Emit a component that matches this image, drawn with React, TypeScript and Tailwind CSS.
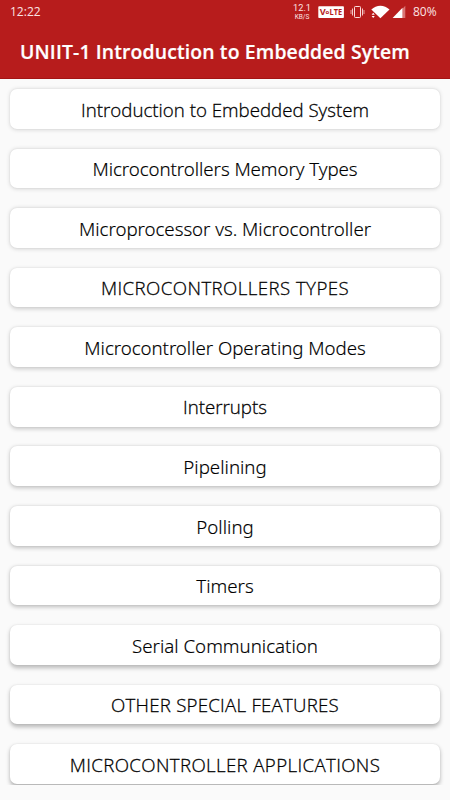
import React from 'react';
interface Topic {
  title: string;
  style: string;
}
const topics: Topic[] = [
{ title: 'Introduction to Embedded System', style: "font-['Open_Sans'] [-webkit-text-stroke:0.28px_black]" },
{ title: 'Microcontrollers Memory Types', style: "font-['Noto_Sans'] [-webkit-text-stroke:0.15px_black] tracking-[-0.06px]" },
{ title: 'Microprocessor vs. Microcontroller', style: "font-['Noto_Sans'] [-webkit-text-stroke:0.15px_black] tracking-[-0.03px]" },
{ title: 'MICROCONTROLLERS TYPES', style: "font-['Open_Sans'] [-webkit-text-stroke:0.28px_black] tracking-[0.41px]" },
{ title: 'Microcontroller Operating Modes', style: "font-['Noto_Sans'] [-webkit-text-stroke:0.15px_black] tracking-[-0.04px]" },
{ title: 'Interrupts', style: "font-['Open_Sans'] [-webkit-text-stroke:0.28px_black]" },
{ title: 'Pipelining', style: "font-['Noto_Sans'] [-webkit-text-stroke:0.15px_black]" },
{ title: 'Polling', style: "font-['Noto_Sans'] [-webkit-text-stroke:0.15px_black]" },
{ title: 'Timers', style: "font-['Noto_Sans'] [-webkit-text-stroke:0.15px_black]" },
{ title: 'Serial Communication', style: "font-['Noto_Sans'] [-webkit-text-stroke:0.15px_black]" },
{ title: 'OTHER SPECIAL FEATURES', style: "font-['Open_Sans'] [-webkit-text-stroke:0.28px_black] tracking-[0.23px]" },
{ title: 'MICROCONTROLLER APPLICATIONS', style: "font-['Open_Sans'] [-webkit-text-stroke:0.28px_black] tracking-[0.36px]" }];

function StatusIcons() {
  return (
    <svg width="90" height="16" viewBox="318 4 90 16" className="block">
      <rect x="318.3" y="6.2" width="25.6" height="11.8" rx="0.8" fill="#fff" />
      <text x="319.8" y="15" fontSize="8.2" fontWeight="700" fill="#b71c1c" textLength="6" lengthAdjust="spacingAndGlyphs">V</text>
      <text x="325.4" y="14.2" fontSize="6" fontWeight="700" fill="#b71c1c">o</text>
      <text x="329.5" y="15" fontSize="8.2" fontWeight="700" fill="#b71c1c" textLength="12.6" lengthAdjust="spacingAndGlyphs">LTE</text>
      <g fill="none" stroke="#fbdede" strokeWidth="1">
        <rect x="354.5" y="6.5" width="6" height="11" rx="0.8" />
        <path d="M352.5 8.5v7M362.5 8.5v7" strokeWidth="0.9" />
        <path d="M351 10v4M364 10v4" strokeWidth="0.7" />
      </g>
      <path d="M371.3 9.6C376.4 4.5 384.4 4.5 389.5 9.6L380.4 18.2z" fill="#fff" />
      <path d="M371.6 14.8l1.6-2.1 1.6 2.1zM371.6 15.9l1.6 2.1 1.6-2.1z" fill="#fff" />
      <path d="M402.5 8.7L405.3 5.8V18H402.5z" fill="#d97474" />
      <path d="M392.6 18L402.5 7.7V18z" fill="#fff" />
    </svg>);

}
function TopicCard({ topic, index }: {topic: Topic;index: number;}) {
  const drop = 0.6 + index * 0.17;
  const alpha = 0.14 + index * 0.013;
  return (
    <div
      className="flex h-[39.8px] shrink-0 items-center justify-center rounded-[7px] bg-white"
      style={{ boxShadow: `0 ${drop}px 4px rgba(0,0,0,${alpha}), 0 0 2px rgba(0,0,0,0.07)` }}>

      <span className={`whitespace-nowrap pt-[1.4px] text-[18.7px] font-light leading-[26px] text-black ${topic.style}`}>
        {topic.title}
      </span>
    </div>);

}
export default function App() {
  return (
    <div className="flex h-[800px] w-[450px] flex-col overflow-hidden bg-[#fafafa] font-['Open_Sans',sans-serif]">
      <header className="h-[79px] shrink-0 border-b border-[#a31414] bg-[#b71c1c] text-white">
        <div className="flex h-6 items-center pl-[10px] text-[12px] text-[#fbe3e3]">
          <span>12:22</span>
          <div className="ml-auto flex items-center">
            <div className="mr-[7px] flex flex-col items-center font-['Roboto']">
              <span className="text-[9.2px] leading-[10px]">12.1</span>
              <span className="text-[6.5px] leading-[9px]">KB/S</span>
            </div>
            <StatusIcons />
            <span className="ml-[5px] w-[37px]">80%</span>
          </div>
        </div>
        <h1 className="whitespace-nowrap pl-5 pt-[14px] text-[19.4px] font-semibold leading-[28px] tracking-[0.13px] [-webkit-text-stroke:0.2px_white]">
          UNIIT-1 Introduction to Embedded Sytem
        </h1>
      </header>
      <main className="flex h-[706px] flex-col gap-[19.78px] overflow-hidden px-[10px] pt-[10px]">
        {topics.map((topic, index) =>
        <TopicCard key={topic.title} topic={topic} index={index} />
        )}
      </main>
    </div>);

}
